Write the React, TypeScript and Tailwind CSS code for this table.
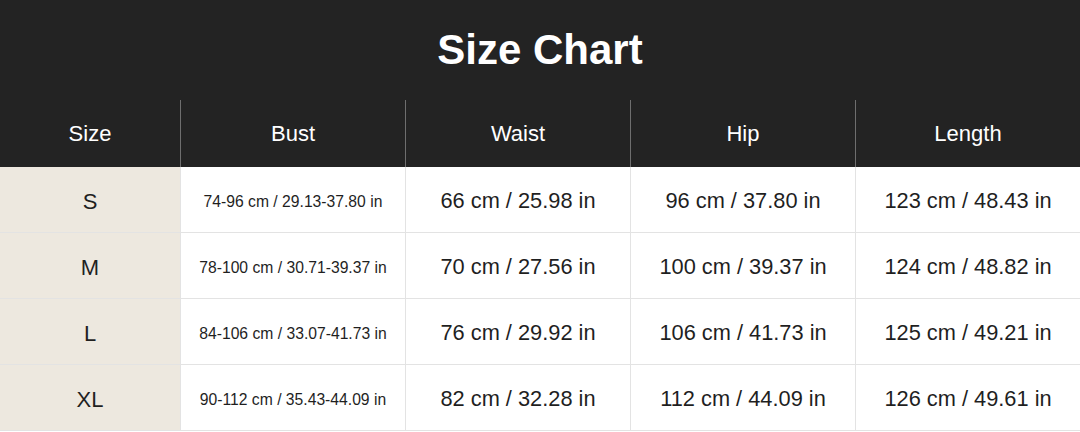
import React from "react";

interface Row {
  size: string;
  bust: string;
  waist: string;
  hip: string;
  length: string;
}

const rows: Row[] = [
  { size: "S", bust: "74-96 cm / 29.13-37.80 in", waist: "66 cm / 25.98 in", hip: "96 cm / 37.80 in", length: "123 cm / 48.43 in" },
  { size: "M", bust: "78-100 cm / 30.71-39.37 in", waist: "70 cm / 27.56 in", hip: "100 cm / 39.37 in", length: "124 cm / 48.82 in" },
  { size: "L", bust: "84-106 cm / 33.07-41.73 in", waist: "76 cm / 29.92 in", hip: "106 cm / 41.73 in", length: "125 cm / 49.21 in" },
  { size: "XL", bust: "90-112 cm / 35.43-44.09 in", waist: "82 cm / 32.28 in", hip: "112 cm / 44.09 in", length: "126 cm / 49.61 in" },
];

const heads = ["Size", "Bust", "Waist", "Hip", "Length"];
const cols = "grid grid-cols-[180px_225px_225px_225px_225px]";

export default function App() {
  return (
    <div className="w-[1080px] h-[432px] bg-white overflow-hidden font-['Liberation_Sans',Arial,sans-serif] text-[#1f1f1f]">
      <div className="bg-[#232323] text-white">
        <div className="h-[100px] flex items-center justify-center">
          <h1 className="text-[42px] font-bold leading-none">Size Chart</h1>
        </div>
        <div className={cols + " h-[67px]"}>
          {heads.map((h, i) => (
            <div
              key={h}
              className={
                "flex items-center justify-center text-[22px] " +
                (i > 0 ? "border-l border-[#6e6e6e]" : "")
              }
            >
              {h}
            </div>
          ))}
        </div>
      </div>
      {rows.map((r) => (
        <div key={r.size} className={cols + " h-[66px] border-b border-[#e3e3e3]"}>
          <div className="flex items-center justify-center pt-[4px] bg-[#ede8df] text-[22px]">{r.size}</div>
          <div className="flex items-center justify-center pt-[4px] border-l border-[#e3e3e3] text-[15.7px]">{r.bust}</div>
          <div className="flex items-center justify-center pt-[4px] border-l border-[#e3e3e3] text-[21.8px]">{r.waist}</div>
          <div className="flex items-center justify-center pt-[4px] border-l border-[#e3e3e3] text-[21.8px]">{r.hip}</div>
          <div className="flex items-center justify-center pt-[4px] border-l border-[#e3e3e3] text-[21.8px]">{r.length}</div>
        </div>
      ))}
    </div>
  );
}
